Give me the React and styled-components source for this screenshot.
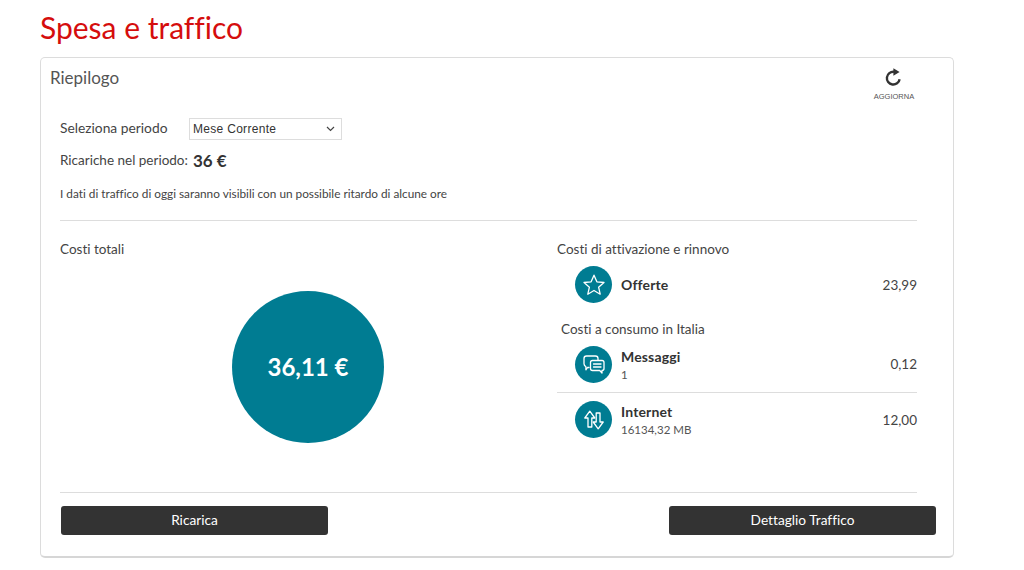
import React from "react";
import styled, { createGlobalStyle } from "styled-components";

const GlobalStyle = createGlobalStyle`
  html, body {
    margin: 0;
    padding: 0;
    background: #fff;
    color: #333;
    font-family: Lato, "Open Sans", sans-serif;
    font-variant-ligatures: none;
  }
  * { box-sizing: border-box; }
`;

const Page = styled.div`
  width: 1024px;
  height: 570px;
  overflow: hidden;
  padding: 9px 0 0 40px;
`;
const Title = styled.h1`
  margin: 0 0 10px;
  height: 38px;
  line-height: 37px;
  font-size: 30px;
  font-weight: 400;
  color: #d50d0d;
`;
const Card = styled.section`
  width: 914px;
  height: 501px;
  border: 1px solid #dcdcdc;
  border-bottom: 2px solid #d6d6d6;
  border-radius: 5px;
  padding: 9px 36px 0 19px;
  display: flex;
  flex-direction: column;
`;
const CardHead = styled.div`
  display: flex;
  justify-content: space-between;
  margin-left: -10px;
  height: 41px;
`;
const CardTitle = styled.h2`
  margin: 0;
  font-size: 17px;
  line-height: 22px;
  font-weight: 400;
  color: #555;
`;
const Refresh = styled.button`
  width: 44px;
  margin: 1px 1px 0 0;
  padding: 0;
  border: 0;
  background: none;
  display: flex;
  flex-direction: column;
  align-items: center;
  align-self: flex-start;
  font-family: "Liberation Sans", sans-serif;
  font-size: 7.5px;
  line-height: 10px;
  color: #555;
  gap: 4px;
`;
const FilterRow = styled.div`
  display: flex;
  align-items: center;
  height: 22px;
  margin-top: 10px;
  font-size: 13.8px;
  color: #444;
`;
const FilterLabel = styled.span`
  width: 129px;
  padding-bottom: 3px;
`;
const Select = styled.div`
  width: 153px;
  height: 22px;
  border: 1px solid #ddd;
  padding: 0 6px 0 3px;
  display: flex;
  align-items: center;
  justify-content: space-between;
  font-family: "Liberation Sans", sans-serif;
  font-size: 12px;
  letter-spacing: 0.3px;
  color: #333;
`;
const TopUpRow = styled.div`
  margin-top: 9px;
  height: 22px;
  display: flex;
  align-items: center;
  gap: 5px;
  font-size: 13.5px;
  color: #444;
`;
const TopUpValue = styled.strong`
  font-size: 17px;
  font-weight: 700;
  color: #333;
`;
const Notice = styled.p`
  margin: 15px 0 0;
  font-size: 11.8px;
  line-height: 16px;
  color: #444;
`;
const Rule = styled.hr`
  margin: 0;
  border: 0;
  border-top: 1px solid #ddd;
`;
const NoticeRule = styled(Rule)`
  margin-top: 18px;
`;
const Columns = styled.div`
  flex: 1;
  display: flex;
`;
const LeftCol = styled.div`
  width: 497px;
  padding-top: 20px;
`;
const RightCol = styled.div`
  flex: 1;
  padding-top: 20px;
`;
const SectionLabel = styled.h3`
  margin: 0;
  font-size: 13.5px;
  line-height: 16px;
  font-weight: 400;
  color: #444;
`;
const IndentedLabel = styled(SectionLabel)`
  margin: 9px 0 0 4px;
`;
const TotalWrap = styled.div`
  margin: 34px 0 0 172px;
`;
const TotalCircle = styled.div`
  width: 152px;
  height: 152px;
  padding-bottom: 2px;
  border-radius: 50%;
  background: #007c92;
  color: #fff;
  display: flex;
  align-items: center;
  justify-content: center;
  font-size: 24px;
  font-weight: 700;
`;
const CostRow = styled.div`
  height: ${(p) => p.$height || 55}px;
  display: flex;
  align-items: center;
  padding-left: 18px;
  padding-bottom: ${(p) => (p.$divided ? 1 : 0)}px;
  border-bottom: ${(p) => (p.$divided ? "1px solid #ddd" : "0")};
`;
const IconCircle = styled.span`
  width: 37px;
  height: 37px;
  border-radius: 50%;
  background: #007c92;
  display: flex;
  align-items: center;
  justify-content: center;
  flex: none;
`;
const CostText = styled.div`
  flex: 1;
  margin-left: 9px;
`;
const CostName = styled.div`
  font-size: 14px;
  line-height: 17px;
  font-weight: 700;
  letter-spacing: 0.15px;
  color: #333;
`;
const CostSub = styled.div`
  margin: 2px 0 -2px;
  font-size: 11.5px;
  line-height: 16px;
  color: #555;
`;
const CostValue = styled.div`
  font-size: 13.5px;
  color: #444;
`;
const Footer = styled.div`
  display: flex;
  justify-content: space-between;
  margin-right: -19px;
  padding: 13px 0 21px 1px;
`;
const ActionButton = styled.button`
  width: 267px;
  height: 29px;
  padding: 0 0 2px;
  border: 0;
  border-radius: 3px;
  background: #333;
  color: #fff;
  font-family: Lato, sans-serif;
  font-variant-ligatures: none;
  font-size: 13.7px;
`;

const iconProps = {
  fill: "none",
  stroke: "#fff",
  strokeWidth: 1.3,
  strokeLinecap: "round",
  strokeLinejoin: "round",
};

const RefreshIcon = () => (
  <svg width="20" height="20" viewBox="0 0 20 20" fill="none">
    <path d="M15.6 11.2a6.4 6.4 0 1 1-5.6-7.4" stroke="#333" strokeWidth="2.4" />
    <path d="M9.4 0.2l6.2 3.8-6.200 3.800z" fill="#333" />
  </svg>
);

const Chevron = () => (
  <svg width="9" height="6" viewBox="0 0 9 6" fill="none">
    <path d="M1 1l3.500 3.500L8 1" stroke="#444" strokeWidth="1.2" />
  </svg>
);

const StarIcon = () => (
  <svg width="24" height="24" viewBox="0 0 24 24" {...iconProps}>
    <path d="M12 2.200l2.900 6.600 7.100.7-5.400 4.700 1.600 7-6.200-3.700-6.200 3.700 1.600-7L2 9.500l7.100-.7z" />
  </svg>
);

const MessagesIcon = () => (
  <svg width="24" height="24" viewBox="0 0 24 24" {...iconProps}>
    <path d="M7 15.500H5.500l-1.600 2.300v-3C2.700 14 2 13 2 11.800V6.500C2 5 3 4 4.500 4h9C15 4 16 5 16 6.500V8" />
    <path d="M10.500 8.500h9.500C21.200 8.500 22 9.300 22 10.500v6c0 1.200-.8 2-2 2v2.500l-2.300-2.500h-7.200c-1.200 0-2-.8-2-2v-6c0-1.200.8-2 2-2z" />
    <path d="M11.500 12h7.500M11.500 15h7.500" />
  </svg>
);

const TransferIcon = () => (
  <svg width="24" height="24" viewBox="0 0 24 24" {...iconProps}>
    <path d="M6 19V10H2.800L7.800 3.200 12.800 10H9.800V19Z" />
    <path d="M14.200 5V14H11.200L16.200 20.800 21.200 14H18V5Z" />
  </svg>
);

const App = () => (
  <Page>
    <GlobalStyle />
    <Title>Spesa e traffico</Title>
    <Card>
      <CardHead>
        <CardTitle>Riepilogo</CardTitle>
        <Refresh>
          <RefreshIcon />
          AGGIORNA
        </Refresh>
      </CardHead>
      <FilterRow>
        <FilterLabel>Seleziona periodo</FilterLabel>
        <Select>
          Mese Corrente
          <Chevron />
        </Select>
      </FilterRow>
      <TopUpRow>
        Ricariche nel periodo: <TopUpValue>36 €</TopUpValue>
      </TopUpRow>
      <Notice>I dati di traffico di oggi saranno visibili con un possibile ritardo di alcune ore</Notice>
      <NoticeRule />
      <Columns>
        <LeftCol>
          <SectionLabel>Costi totali</SectionLabel>
          <TotalWrap>
            <TotalCircle>36,11 €</TotalCircle>
          </TotalWrap>
        </LeftCol>
        <RightCol>
          <SectionLabel>Costi di attivazione e rinnovo</SectionLabel>
          <CostRow>
            <IconCircle><StarIcon /></IconCircle>
            <CostText>
              <CostName>Offerte</CostName>
            </CostText>
            <CostValue>23,99</CostValue>
          </CostRow>
          <IndentedLabel>Costi a consumo in Italia</IndentedLabel>
          <CostRow $divided $height={56}>
            <IconCircle><MessagesIcon /></IconCircle>
            <CostText>
              <CostName>Messaggi</CostName>
              <CostSub>1</CostSub>
            </CostText>
            <CostValue>0,12</CostValue>
          </CostRow>
          <CostRow $height={53}>
            <IconCircle><TransferIcon /></IconCircle>
            <CostText>
              <CostName>Internet</CostName>
              <CostSub>16134,32 MB</CostSub>
            </CostText>
            <CostValue>12,00</CostValue>
          </CostRow>
        </RightCol>
      </Columns>
      <Rule />
      <Footer>
        <ActionButton>Ricarica</ActionButton>
        <ActionButton>Dettaglio Traffico</ActionButton>
      </Footer>
    </Card>
  </Page>
);

export default App;
